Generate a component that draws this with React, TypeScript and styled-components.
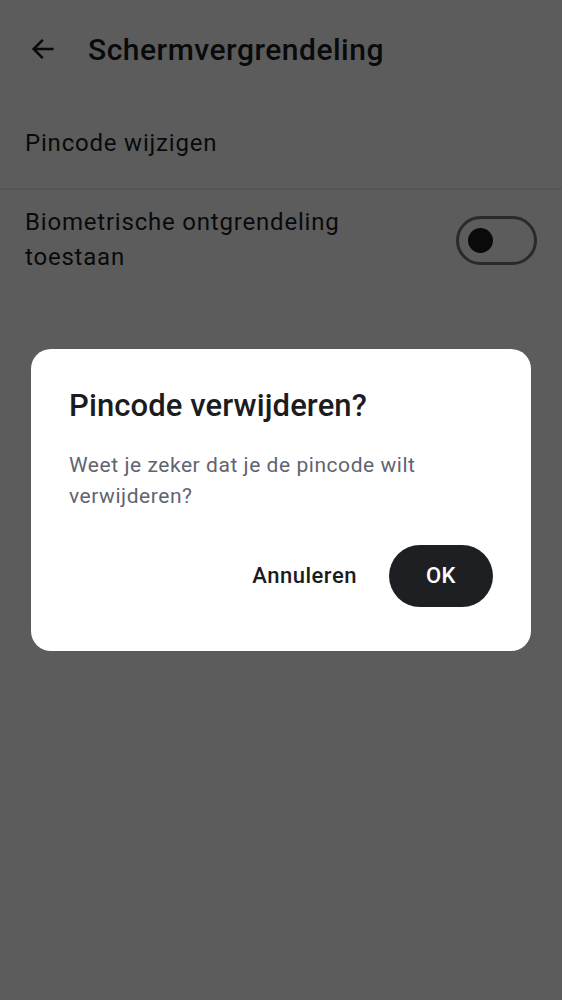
import styled, { createGlobalStyle } from "styled-components";

const GlobalStyle = createGlobalStyle`
  html, body {
    margin: 0;
    padding: 0;
    background: #ffffff;
  }
  body {
    font-family: Roboto, "Liberation Sans", sans-serif;
    -webkit-font-smoothing: antialiased;
  }
`;

const Screen = styled.div`
  position: relative;
  width: 562px;
  height: 1000px;
  background: #ffffff;
  overflow: hidden;
`;

const Header = styled.header`
  display: flex;
  align-items: center;
  height: 98px;
  padding: 0 0 0 28px;
  gap: 30px;
`;

const BackButton = styled.button`
  display: flex;
  align-items: center;
  justify-content: center;
  width: 30px;
  height: 30px;
  padding: 0;
  border: none;
  background: none;
  color: #1b1c1f;
`;

const Title = styled.h1`
  margin: 0;
  font-size: 30px;
  font-weight: 500;
  color: #1b1c1f;
  letter-spacing: 0.5px;
`;

const Row = styled.div<{ $divider?: boolean }>`
  display: flex;
  align-items: center;
  justify-content: space-between;
  padding: 0 25px;
  min-height: ${(p) => (p.$divider ? "92px" : "100px")};
  border-bottom: ${(p) => (p.$divider ? "2px solid #ececec" : "none")};
  box-sizing: border-box;
`;

const RowLabel = styled.span`
  font-size: 24px;
  line-height: 35px;
  color: #1b1c1f;
  letter-spacing: 0.8px;
  max-width: 360px;
`;

const Switch = styled.div`
  width: 81px;
  height: 49px;
  box-sizing: border-box;
  border: 3px solid #73767c;
  border-radius: 25px;
  flex-shrink: 0;
  display: flex;
  align-items: center;
  padding-left: 9px;
`;

const Thumb = styled.div`
  width: 25px;
  height: 25px;
  border-radius: 50%;
  background: #1b1c1f;
`;

const Scrim = styled.div`
  position: absolute;
  inset: 0;
  background: rgba(0, 0, 0, 0.64);
  display: flex;
  align-items: center;
  justify-content: center;
`;

const Dialog = styled.div`
  width: 500px;
  box-sizing: border-box;
  margin-bottom: 1px;
  background: #ffffff;
  border-radius: 20px;
  padding: 37px 38px 44px 38px;
`;

const DialogTitle = styled.h2`
  margin: 0 0 24px;
  font-size: 31px;
  line-height: 40px;
  font-weight: 500;
  color: #1b1c1f;
  letter-spacing: 0.1px;
`;

const DialogText = styled.p`
  margin: 0 0 33px;
  font-size: 21px;
  line-height: 31px;
  color: #5f6470;
  letter-spacing: 0.55px;
`;

const Actions = styled.div`
  display: flex;
  justify-content: flex-end;
  align-items: center;
  gap: 16px;
`;

const ActionButton = styled.button<{ $filled?: boolean }>`
  height: 62px;
  padding: 0 ${(p) => (p.$filled ? "37px" : "16px")};
  border: none;
  border-radius: 31px;
  font-family: Roboto, "Liberation Sans", sans-serif;
  font-size: 22px;
  font-weight: 500;
  letter-spacing: 0.5px;
  background: ${(p) => (p.$filled ? "#1e1f23" : "transparent")};
  color: ${(p) => (p.$filled ? "#ffffff" : "#1b1c1f")};
`;

export default function App() {
  return (
    <Screen>
      <GlobalStyle />
      <Header>
        <BackButton aria-label="Terug">
          <svg width="28" height="28" viewBox="0 0 24 24" fill="none" stroke="currentColor" strokeWidth="2.2" strokeLinecap="square">
            <path d="M20 12H5" />
            <path d="M11 5l-7 7 7 7" strokeLinejoin="miter" />
          </svg>
        </BackButton>
        <Title>Schermvergrendeling</Title>
      </Header>
      <Row $divider>
        <RowLabel>Pincode wijzigen</RowLabel>
      </Row>
      <Row>
        <RowLabel>Biometrische ontgrendeling toestaan</RowLabel>
        <Switch>
          <Thumb />
        </Switch>
      </Row>
      <Scrim>
        <Dialog>
          <DialogTitle>Pincode verwijderen?</DialogTitle>
          <DialogText>Weet je zeker dat je de pincode wilt verwijderen?</DialogText>
          <Actions>
            <ActionButton>Annuleren</ActionButton>
            <ActionButton $filled>OK</ActionButton>
          </Actions>
        </Dialog>
      </Scrim>
    </Screen>
  );
}
